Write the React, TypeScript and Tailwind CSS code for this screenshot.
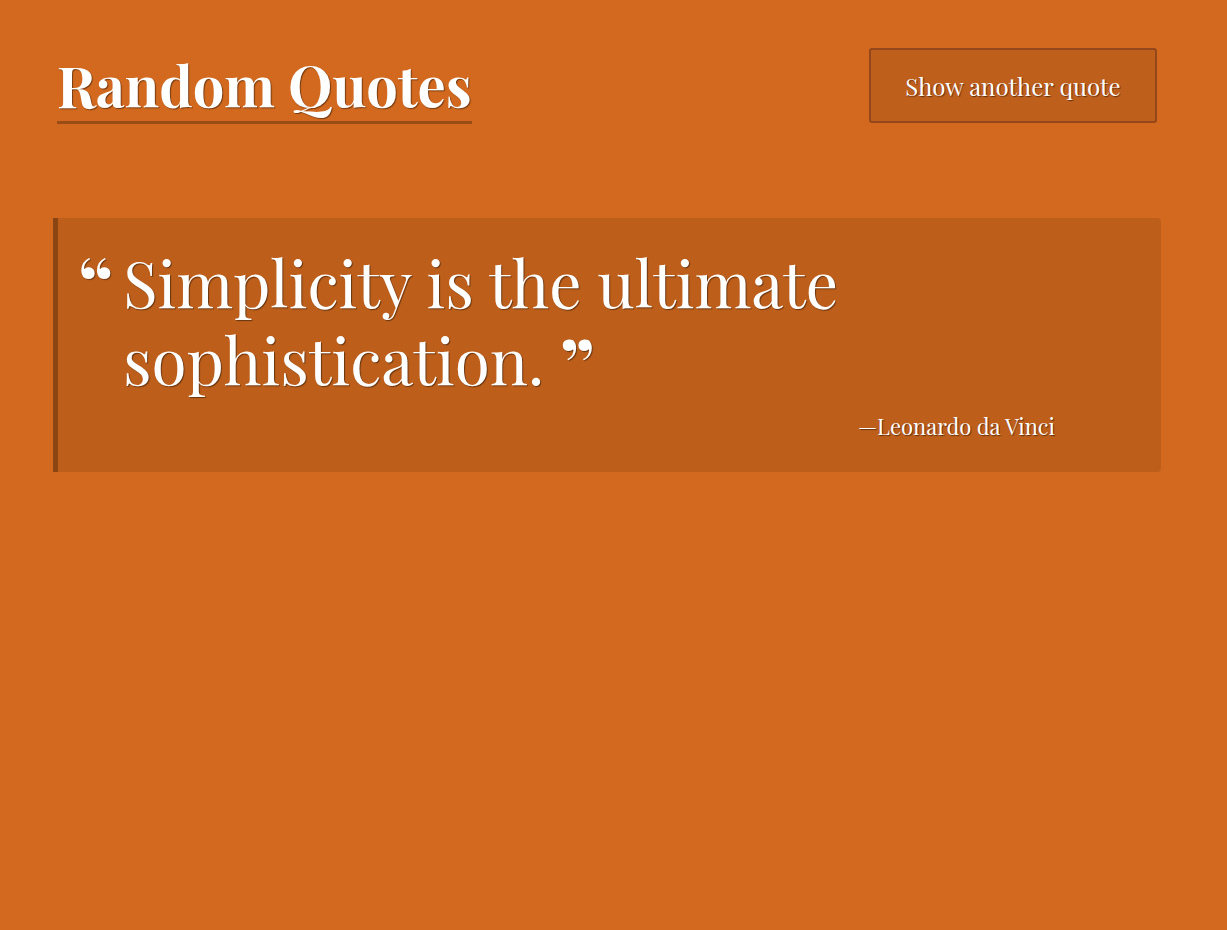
const serif = { fontFamily: "'Playfair Display', 'Liberation Serif', serif" };

export default function App() {
  return (
    <div className="min-h-[930px] bg-[#d2691e] pl-[53px] pr-[66px] pt-[48px] text-white" style={serif}>
      {/* Header */}
      <header className="flex items-start justify-between px-1">
        <h1 className="mt-[9px] border-b-[3px] border-[#9a4c17] pb-[8px] text-[56px] font-bold leading-[56px] [text-shadow:1px_1px_1px_rgba(0,0,0,0.45)]">
          Random Quotes
        </h1>
        <button className="h-[75px] w-[288px] rounded-[3px] border-2 border-[#94471a] bg-[#bf5f1c] text-[24px] [text-shadow:1px_1px_1px_rgba(0,0,0,0.5)]">
          Show another quote
        </button>
      </header>

      {/* Quote card */}
      <section className="mt-[94px] rounded-r-[4px] border-l-[5px] border-[#8b4513] bg-[#bd5f1b] pl-[20px] pr-[106px] pt-[25px] pb-[29px]">
        <div className="flex">
          <span className="w-[45px] shrink-0 text-[76px] font-bold leading-[77px] [text-shadow:1px_1px_1px_rgba(0,0,0,0.4)]">
            &ldquo;
          </span>
          <blockquote className="text-[64px] leading-[77px] [text-shadow:1px_1px_1px_rgba(0,0,0,0.45)]">
            Simplicity is the ultimate sophistication.{' '}
            <span className="align-[-9px] text-[76px] font-bold leading-[40px]">&rdquo;</span>
          </blockquote>
        </div>
        <p className="mt-[13px] text-right text-[22px] [text-shadow:1px_1px_1px_rgba(0,0,0,0.5)]">&mdash;Leonardo da Vinci</p>
      </section>
    </div>
  );
}
